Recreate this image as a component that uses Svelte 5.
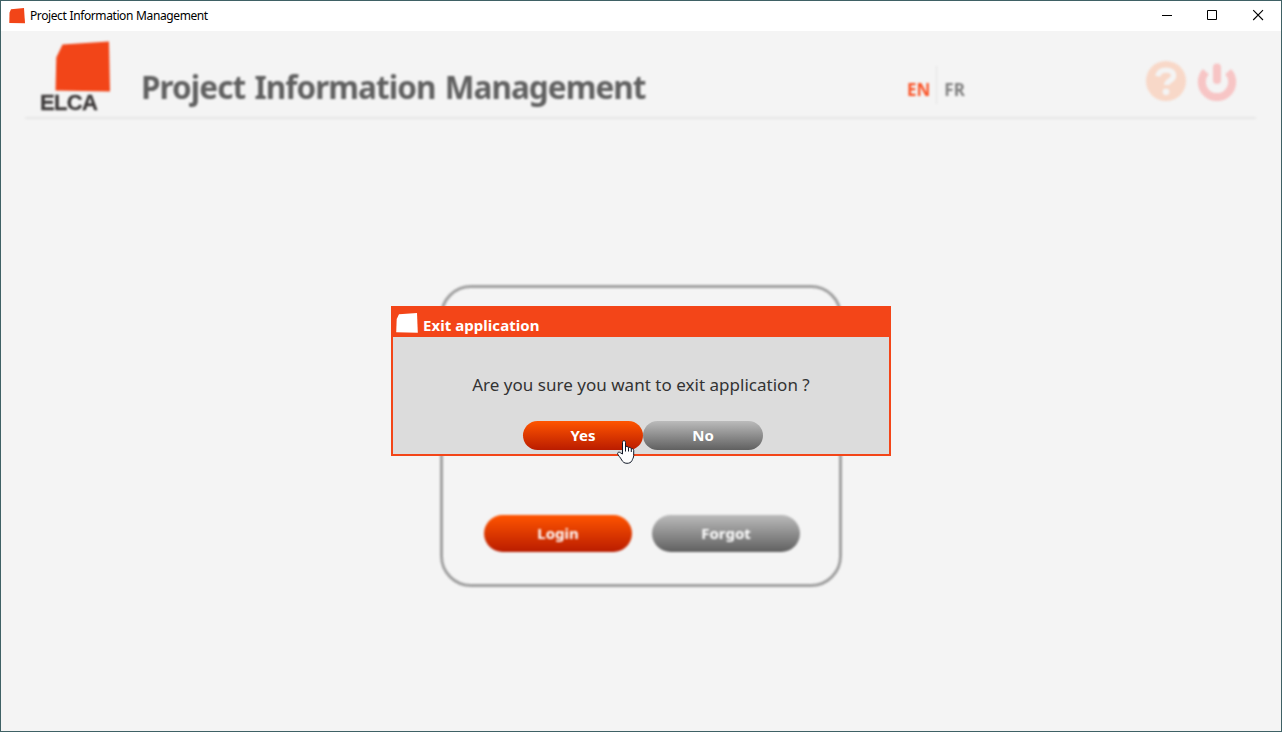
<script>
  let language = $state('EN');
  const languages = ['EN', 'FR'];
</script>

<div class="window">
  <div class="titlebar">
    <svg class="app-icon" width="16" height="16" viewBox="0 0 16 16"><path d="M2 1.2 15 0 16 15.2.3 14.9.5 4.7Z" fill="#f24518" /></svg>
    <span class="caption">Project Information Management</span>
    <svg class="control" width="46" height="30" viewBox="0 0 46 30"><path d="M19 14.5h10" stroke="#000" /></svg>
    <svg class="control" width="46" height="30" viewBox="0 0 46 30"><path d="M18.5 9.5h9v9h-9z" fill="none" stroke="#000" /></svg>
    <svg class="control" width="46" height="30" viewBox="0 0 46 30"><path d="M18.2 9.2 28 19M28 9.2 18.2 19" stroke="#000" stroke-width="1.1" /></svg>
  </div>

  <div class="page">
    <header>
      <div class="logo">
        <svg width="56" height="52" viewBox="0 0 56 52"><path d="M7.5 3.5 54 .5 55 50.5.5 49.5 1.3 16.5Z" fill="#f24518" /></svg>
        <span>ELCA</span>
      </div>
      <h1>Project Information Management</h1>
      <nav>
        {#each languages as code}
          <button class:active={language === code} onclick={() => (language = code)}>{code}</button>
        {/each}
      </nav>
      <div class="tools">
        <svg width="40" height="40" viewBox="0 0 40 40">
          <circle cx="20" cy="20" r="20" fill="#f8d8c8" />
          <path d="M11.7 15.2c1-4.6 4.3-6.1 8.5-6.1 4.7 0 7.4 2.2 7.4 5.7 0 5-6.9 4.3-6.9 9.2" fill="none" stroke="#f4f4f4" stroke-width="5.4" />
          <circle cx="20" cy="30.8" r="3.4" fill="#f4f4f4" />
        </svg>
        <svg width="40" height="40" viewBox="0 0 40 40">
          <path d="M8.8 10.6a15.2 15.2 0 1 0 22.4 0" fill="none" stroke="#f7c5c5" stroke-width="8" />
          <path d="M20 6.5v12.5" stroke="#f7c5c5" stroke-width="8" stroke-linecap="round" />
        </svg>
      </div>
    </header>
    <main>
      <div class="panel">
        <button class="pill primary">Login</button>
        <button class="pill">Forgot</button>
      </div>
    </main>
  </div>

  <div class="dialog" role="dialog">
    <div class="dialog-title">
      <svg width="22" height="20" viewBox="0 0 22 20"><path d="M3 1.2 21 0 21.8 19.8.2 19.3.7 6Z" fill="#fff" /></svg>
      <span>Exit application</span>
    </div>
    <p>Are you sure you want to exit application ?</p>
    <div class="actions">
      <button class="pill primary small">Yes</button>
      <button class="pill small">No</button>
    </div>
  </div>

  <svg class="pointer" width="18" height="24" viewBox="0 0 18 24">
    <path d="M5.5 14V2.4C5.5.1 8.5.1 8.5 2.4V7c.5-1 2.7-.8 3 .8.8-.8 2.5-.4 2.8 1 .9-.5 2.4.1 2.4 1.6v5.1c0 2.3-1.2 3.4-1.7 5.1-1 2-2.8 2.7-5 2.7-2.8 0-4.2-1.4-5.3-3.3C3.5 17.4.7 15.2.6 13.5c0-1.4 1.8-1.8 3-.6Z" fill="#fff" stroke="#111827" />
    <path d="M8.5 7v4.5M11.5 8v3.5M14.3 9v3" stroke="#111827" />
  </svg>
</div>

<style>
  :global(body) {
    margin: 0;
    overflow: hidden;
  }
  .window {
    position: relative;
    box-sizing: border-box;
    width: 1282px;
    height: 732px;
    display: flex;
    flex-direction: column;
    border: 1px solid #3f6165;
    background: #f4f4f4;
    font-family: "Noto Sans", "Open Sans", sans-serif;
  }
  .titlebar {
    flex: 0 0 30px;
    display: flex;
    align-items: center;
    padding-left: 8px;
    background: #fff;
  }
  .caption {
    flex: 1;
    margin: -2px 0 0 5px;
    font-size: 12px;
    letter-spacing: -0.4px;
    word-spacing: 0.4px;
    color: #000;
    white-space: nowrap;
  }
  .control {
    flex: none;
  }
  .page {
    flex: 1;
    display: flex;
    flex-direction: column;
    filter: blur(1px);
  }
  header {
    box-sizing: border-box;
    height: 88px;
    margin: 0 25px 0 24px;
    display: flex;
    align-items: flex-start;
    border-bottom: 2px solid #e8e8e8;
  }
  .logo {
    width: 73px;
    padding: 10px 0 0 15px;
    display: flex;
    flex-direction: column;
  }
  .logo svg {
    margin-left: 15px;
  }
  .logo span {
    font: bold 22px/22px "Liberation Sans", sans-serif;
    letter-spacing: -0.7px;
    color: #3c3939;
    margin-top: -1px;
    -webkit-text-stroke: 0.3px #3c3939;
  }
  h1 {
    width: 766px;
    margin: 34px 0 0 28px;
    font-size: 31.5px;
    line-height: 44px;
    letter-spacing: -0.95px;
    word-spacing: 2px;
    color: #606060;
    white-space: nowrap;
  }
  nav {
    display: flex;
    margin-top: 35px;
  }
  nav button {
    height: 38px;
    padding: 9px 0 0;
    border: 0;
    background: none;
    font: bold 17px/24px "Noto Sans", sans-serif;
    color: #808080;
  }
  nav button + button {
    margin-left: 6px;
    padding-left: 7px;
    border-left: 1px solid #e4e4e4;
  }
  nav .active {
    color: #fa5428;
  }
  .tools {
    display: flex;
    gap: 11px;
    margin: 30px 19px 0 auto;
  }
  main {
    flex: 1;
    display: flex;
    justify-content: center;
    align-items: flex-start;
    padding-top: 166px;
  }
  .panel {
    box-sizing: border-box;
    width: 402px;
    height: 302px;
    display: flex;
    justify-content: center;
    align-items: flex-end;
    gap: 20px;
    padding: 0 0 32px 2px;
    border: 3px solid #a0a0a0;
    border-radius: 31px;
  }
  .pill {
    width: 148px;
    height: 37px;
    padding: 0 0 2px;
    border: 0;
    border-radius: 19px;
    background: linear-gradient(#bbb, #606060);
    color: #fff;
    font: bold 15px/20px "Noto Sans", sans-serif;
  }
  .primary {
    background: linear-gradient(#ff5500, #ba1c00);
  }
  .small {
    width: 120px;
    height: 29px;
    border-radius: 15px;
  }
  .dialog {
    position: absolute;
    left: 390px;
    top: 305px;
    box-sizing: border-box;
    width: 500px;
    height: 150px;
    display: flex;
    flex-direction: column;
    border: 2px solid #f34518;
    background: #dcdcdc;
  }
  .dialog-title {
    height: 29px;
    display: flex;
    gap: 5px;
    padding-left: 3px;
    background: #f34518;
    color: #fff;
    font-size: 15px;
    font-weight: bold;
    line-height: 35px;
    letter-spacing: 0.05px;
  }
  .dialog-title svg {
    margin-top: 5px;
  }
  p {
    margin: 35px 0 24px;
    text-align: center;
    font-size: 17px;
    line-height: 25px;
    letter-spacing: 0.02px;
    color: #333;
    white-space: nowrap;
  }
  .actions {
    display: flex;
    padding-left: 130px;
  }
  .pointer {
    position: absolute;
    left: 615.5px;
    top: 439px;
  }
</style>
